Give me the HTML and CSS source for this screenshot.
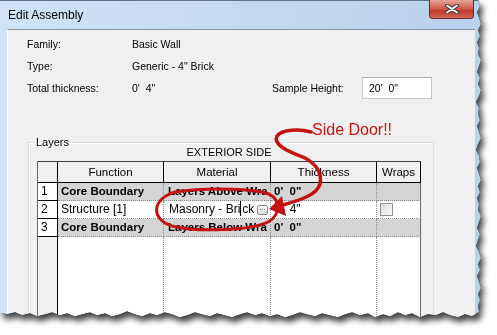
FILE: index.html
```html
<!DOCTYPE html>
<html lang="en">
<head>
  <meta charset="UTF-8" />
  <meta name="viewport" content="width=device-width, initial-scale=1.0" />
  <title>Edit Assembly</title>
  <link rel="stylesheet" href="styles.css">
</head>
<body>
  <div class="stage">
    <div class="shot">
      <div class="window">
        <div class="titlebar">
          <span class="title">Edit Assembly</span>
          <span class="close">
            <svg width="14" height="10" viewBox="0 0 14 10">
              <path d="M2 1.5 L12 8.5 M12 1.5 L2 8.5" stroke="#4a3a3a" stroke-width="4" stroke-linecap="round"/>
              <path d="M2 1.5 L12 8.5 M12 1.5 L2 8.5" stroke="#fff" stroke-width="2" stroke-linecap="round"/>
            </svg>
          </span>
        </div>
        <div class="client">
          <div class="props">
            <div class="prop-row">
              <span class="label">Family:</span>
              <span class="value">Basic Wall</span>
            </div>
            <div class="prop-row">
              <span class="label">Type:</span>
              <span class="value">Generic - 4" Brick</span>
            </div>
            <div class="prop-row">
              <span class="label">Total thickness:</span>
              <span class="value wide">0'&nbsp; 4"</span>
              <span class="label short">Sample Height:</span>
              <span class="textbox">20'&nbsp; 0"</span>
            </div>
          </div>

          <fieldset class="layers">
            <legend>Layers</legend>
            <div class="side">EXTERIOR SIDE</div>
            <div class="grid">
              <div class="tr head">
                <div class="th"></div>
                <div class="th">Function</div>
                <div class="th">Material</div>
                <div class="th">Thickness</div>
                <div class="th">Wraps</div>
              </div>
              <div class="tr core">
                <div class="rh">1</div>
                <div class="td">Core Boundary</div>
                <div class="td">Layers Above Wra</div>
                <div class="td">0'&nbsp; 0"</div>
                <div class="td last"></div>
              </div>
              <div class="tr">
                <div class="rh">2</div>
                <div class="td">Structure [1]</div>
                <div class="td edit">
                  <span>Masonry - Bri<span class="caret"></span>ck</span>
                  <span class="dots">...</span>
                </div>
                <div class="td">0'&nbsp; 4"</div>
                <div class="td last"><span class="check"></span></div>
              </div>
              <div class="tr core">
                <div class="rh">3</div>
                <div class="td">Core Boundary</div>
                <div class="td">Layers Below Wra</div>
                <div class="td">0'&nbsp; 0"</div>
                <div class="td last"></div>
              </div>
              <div class="tr fill">
                <div class="rh"></div>
                <div class="td"></div>
                <div class="td"></div>
                <div class="td"></div>
                <div class="td last"></div>
              </div>
            </div>
          </fieldset>
        </div>
      </div>
    </div>

    <div class="note">Side Door!!</div>
    <svg class="ink" width="497" height="335" viewBox="0 0 497 335">
      <path d="M175 192 C200 188 240 188 262 192 C282 196 282 214 268 222 C250 231 195 232 172 226 C152 220 150 200 175 192 Z"
            fill="none" stroke="#c41212" stroke-width="3"/>
      <path d="M311 132 C300 129 282 129 277 136 C272 145 290 152 305 158 C318 165 322 175 320 184 C317 195 300 200 283 205"
            fill="none" stroke="#c41212" stroke-width="3.5" stroke-linecap="round"/>
      <polygon points="269,209 282,196 286,216" fill="#c41212"/>
    </svg>
  </div>
</body>
</html>
```

FILE: styles.css
```css
body {
  margin: 0;
  background: #fff;
  font-family: "Liberation Sans", Arial, sans-serif;
  font-size: 11px;
  color: #000;
}

.stage {
  position: relative;
  width: 497px;
  height: 335px;
  overflow: hidden;
}

/* torn screenshot with its shadow */
.shot {
  filter: drop-shadow(0 0 0.6px #000) drop-shadow(3px 5px 3px rgba(0, 0, 0, 0.75));
}

.window {
  width: 482px;
  height: 318px;
  display: flex;
  flex-direction: column;
  background: linear-gradient(to right, #d0e3f7, #b8d1ec);
  clip-path: polygon(0 0, 478px 0, 480px 6px, 477px 12px, 479px 18px, 481px 24px, 478px 30px, 480px 36px, 477px 42px, 479px 48px, 478px 54px, 481px 60px, 479px 66px, 477px 72px, 480px 78px, 478px 84px, 481px 90px, 479px 96px, 476px 102px, 479px 108px, 478px 114px, 480px 120px, 477px 126px, 479px 132px, 481px 138px, 478px 144px, 476px 150px, 479px 156px, 480px 162px, 477px 168px, 479px 174px, 481px 180px, 478px 186px, 480px 192px, 477px 198px, 479px 204px, 478px 210px, 481px 216px, 479px 222px, 477px 228px, 480px 234px, 478px 240px, 476px 246px, 479px 252px, 481px 258px, 478px 264px, 480px 270px, 477px 276px, 479px 282px, 481px 288px, 478px 294px, 480px 300px, 478px 306px, 479px 312px, 472px 316px, 465px 314px, 458px 317px, 450px 315px, 443px 312px, 436px 315px, 428px 314px, 420px 317px, 412px 313px, 405px 315px, 398px 312px, 390px 316px, 383px 314px, 375px 317px, 368px 313px, 360px 315px, 352px 312px, 345px 314px, 338px 317px, 330px 315px, 322px 313px, 315px 316px, 307px 314px, 300px 312px, 292px 315px, 285px 317px, 277px 314px, 270px 316px, 262px 313px, 255px 315px, 247px 312px, 240px 314px, 232px 317px, 225px 315px, 217px 313px, 210px 316px, 202px 314px, 195px 312px, 187px 315px, 180px 317px, 172px 314px, 165px 312px, 157px 315px, 150px 313px, 142px 316px, 135px 314px, 127px 311px, 120px 314px, 112px 316px, 105px 313px, 97px 315px, 90px 312px, 82px 314px, 75px 316px, 67px 313px, 60px 315px, 52px 312px, 45px 314px, 37px 316px, 30px 313px, 22px 315px, 15px 312px, 7px 314px, 0 313px);
}

.titlebar {
  height: 29px;
  display: flex;
  justify-content: space-between;
  align-items: flex-start;
  padding: 0 8px;
  border-top: 1px solid #5f7186;
  box-sizing: border-box;
}

.title {
  font-size: 12px;
  line-height: 28px;
  color: #000;
}

.close {
  width: 45px;
  height: 19px;
  margin-top: -1px;
  display: flex;
  align-items: center;
  justify-content: center;
  box-sizing: border-box;
  border: 1px solid #6b2a24;
  border-top: none;
  border-radius: 0 0 4px 4px;
  background: linear-gradient(to bottom, #e3a596, #cf5a4c 50%, #c2382e 60%, #d26a55);
}

.client {
  flex: 1;
  margin: 0 7px;
  background: #f0f0f0;
  border-top: 1px solid #8193a8;
  border-left: 1px solid #fbfdff;
}

.props {
  padding: 3px 0 0 19px;
}

.prop-row {
  display: flex;
  align-items: center;
  height: 22px;
  font-size: 10.5px;
}

.label {
  width: 105px;
}

.value.wide {
  width: 140px;
}

.label.short {
  width: 90px;
}

.textbox {
  width: 70px;
  height: 22px;
  box-sizing: border-box;
  padding-left: 6px;
  line-height: 20px;
  background: #fff;
  border: 1px solid #c5c9d0;
  border-top-color: #abadb3;
}

.layers {
  margin: 37px 0 0 20px;
  width: 406px;
  height: 200px;
  box-sizing: border-box;
  padding: 0 12px 0 8px;
  border: 1px solid #d5dfe5;
  box-shadow: inset 1px 1px 0 #fff;
  min-width: 0;
}

.layers legend {
  padding: 0 2px;
  margin-left: -3px;
  font-size: 11px;
  line-height: 12px;
}

.side {
  text-align: center;
  font-size: 11px;
  line-height: 13px;
  margin: -2px 0 2px;
}

.grid {
  width: 384px;
  border-top: 1px solid #404040;
  border-left: 1px solid #696969;
  box-sizing: border-box;
}

.tr {
  display: grid;
  grid-template-columns: 20px 106px 107px 106px 44px;
}

.tr > div {
  box-sizing: border-box;
  overflow: hidden;
  white-space: nowrap;
}

.th {
  height: 21px;
  line-height: 20px;
  text-align: center;
  font-size: 11.5px;
  background: #f0f0f0;
  border-right: 1px solid #000;
  border-bottom: 1px solid #000;
}

.rh {
  height: 18px;
  line-height: 17px;
  padding-left: 3px;
  font-size: 12px;
  background: #fff;
  border-right: 1px solid #000;
  border-bottom: 1px solid #000;
}

.td {
  height: 18px;
  line-height: 17px;
  padding-left: 3px;
  font-size: 12px;
  background: #fff;
  border-right: 1px dotted #8c8c8c;
  border-bottom: 1px dotted #8c8c8c;
}

.td:nth-child(3) {
  padding-left: 4px;
}

.td.last {
  border-right: 1px solid #696969;
}

.core .td {
  background: #d4d4d4;
  font-weight: bold;
  font-size: 11.5px;
}

.td.edit {
  display: flex;
  align-items: center;
  padding-left: 5px;
  padding-right: 2px;
}

.caret {
  display: inline-block;
  width: 1px;
  height: 15px;
  margin: 0 1px -3px 0;
  background: #000;
}

.dots {
  margin-left: auto;
  width: 11px;
  height: 10px;
  box-sizing: border-box;
  border: 1px solid #8a8a8a;
  border-radius: 2px;
  background: linear-gradient(#fdfdfd, #dcdcdc);
  font-size: 8px;
  line-height: 4px;
  text-align: center;
  color: #333;
}

.check {
  display: inline-block;
  width: 13px;
  height: 13px;
  margin-top: 2px;
  box-sizing: border-box;
  border: 1px solid #8f8f8f;
  background: linear-gradient(135deg, #dcdcdc, #fbfbfb);
  vertical-align: top;
}

.fill .rh {
  height: 100px;
  background: #f0f0f0;
  border-bottom: none;
}

.fill .td {
  height: 100px;
  border-bottom: none;
}

/* red mark-up drawn over the screenshot */
.note {
  position: absolute;
  left: 312px;
  top: 122px;
  font-size: 16px;
  line-height: 16px;
  color: #cc1111;
}

.ink {
  position: absolute;
  left: 0;
  top: 0;
  pointer-events: none;
}
```
